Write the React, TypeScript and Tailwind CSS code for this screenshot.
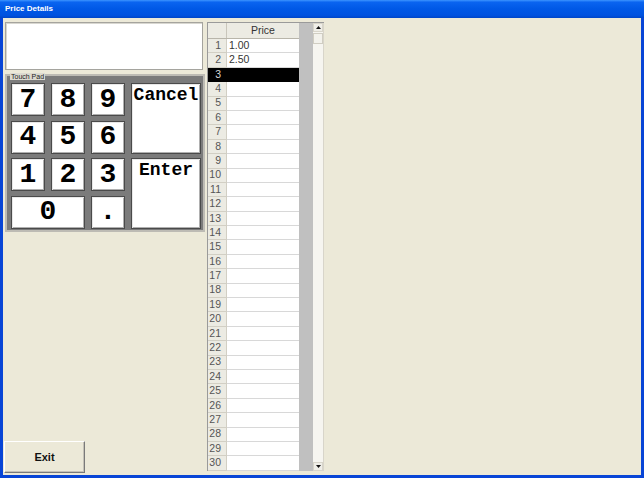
import React from "react";

const ui = { fontFamily: '"Liberation Sans", Arial, sans-serif' };
const mono = { fontFamily: '"Liberation Mono", "Courier New", monospace' };

const prices: Record<number, string> = { 1: "1.00", 2: "2.50" };
const rows = Array.from({ length: 30 }, (_, i) => i + 1);
const selectedRow = 3;

function PadKey({ label, className = "" }: { label: string; className?: string }) {
  return (
    <button
      className={`flex items-center justify-center bg-white border border-[#4a4a4a] shadow-[inset_1px_1px_0_#e8e8e8,inset_-1px_-1px_0_#b0b0b0] text-[28px] font-bold text-black leading-none ${className}`}
      style={mono}
    >
      {label}
    </button>
  );
}

function WordKey({ label, className = "" }: { label: string; className?: string }) {
  return (
    <button
      className={`flex items-start justify-center pt-[2px] bg-white border border-[#4a4a4a] shadow-[inset_1px_1px_0_#e8e8e8,inset_-1px_-1px_0_#b0b0b0] text-[18px] leading-[18px] font-bold text-black ${className}`}
      style={mono}
    >
      {label}
    </button>
  );
}

function TouchPad() {
  return (
    <div className="relative mt-[4px] w-[200px] h-[158px] bg-[#7b7b7b] border-2 border-[#bdbbb4] pl-[4px] pt-[7px]">
      <span
        className="absolute left-[3px] top-[-3px] px-[1px] bg-[#dcdad0] text-[7px] leading-[7px] text-[#222]"
        style={ui}
      >
        Touch Pad
      </span>
      <div className="grid grid-cols-[34px_34px_34px_70px] grid-rows-[33px_33px_33px_33px] gap-x-[6px] gap-y-[4.6px]">
        <PadKey label="7" />
        <PadKey label="8" />
        <PadKey label="9" />
        <WordKey label="Cancel" className="row-span-2" />
        <PadKey label="4" />
        <PadKey label="5" />
        <PadKey label="6" />
        <PadKey label="1" />
        <PadKey label="2" />
        <PadKey label="3" />
        <WordKey label="Enter" className="row-span-2" />
        <PadKey label="0" className="col-span-2" />
        <PadKey label="." />
      </div>
    </div>
  );
}

function ScrollArrow({ up }: { up: boolean }) {
  return (
    <div className="h-[9px] bg-[#efeee8] border border-[#d8d5ca] flex items-center justify-center">
      <svg width="5" height="3" viewBox="0 0 5 3">
        {up ? <polygon points="0,3 5,3 2.5,0" fill="#111" /> : <polygon points="0,0 5,0 2.5,3" fill="#111" />}
      </svg>
    </div>
  );
}

function PriceGrid() {
  return (
    <div className="ml-[1px] flex h-[449px] border-l border-t border-[#9a9a9a]" style={ui}>
      <div className="flex flex-col w-[91px]">
        <div className="flex h-[16px] shrink-0 border-b border-[#b8b5aa] bg-[#ecebe3]">
          <div className="w-[19px] border-r border-[#c9c6bb]" />
          <div className="flex-1 flex items-center justify-center text-[10.5px] text-[#333]">Price</div>
        </div>
        {rows.map((r) => {
          const sel = r === selectedRow;
          return (
            <div key={r} className="flex h-[14.4px] shrink-0">
              <div
                className={`w-[19px] flex items-center justify-end pr-[5px] text-[10.5px] border-r border-b ${
                  sel ? "bg-black text-[#d8d8d8] border-black" : "bg-[#ecebe3] text-[#555] border-[#d2cfc4]"
                }`}
              >
                {r}
              </div>
              <div
                className={`flex-1 flex items-center pl-[2px] text-[10.5px] border-b ${
                  sel ? "bg-black border-black" : "bg-white text-[#333] border-[#d8d8d8]"
                }`}
              >
                {prices[r] ?? ""}
              </div>
            </div>
          );
        })}
      </div>
      <div className="w-[14px] bg-[#c0c0c0]" />
      <div className="w-[11px] flex flex-col bg-[#f6f5f0] border-r border-[#d8d5ca]">
        <ScrollArrow up />
        <div className="mt-[1px] h-[11px] bg-[#f3f2ec] border border-[#d0cdc2]" />
        <div className="flex-1" />
        <ScrollArrow up={false} />
      </div>
    </div>
  );
}

export default function App() {
  return (
    <div className="w-[644px] h-[478px] flex flex-col bg-[#0845d6] overflow-hidden">
      <div className="h-[18px] shrink-0 flex items-center pl-[5px] bg-[linear-gradient(to_bottom,#3d95ff_0%,#0a64f0_12%,#0058e6_50%,#0052e0_85%,#0046c8_100%)]">
        <span className="text-white font-bold text-[8px] leading-none" style={ui}>
          Price Details
        </span>
      </div>
      <div className="flex-1 mx-[3px] mb-[3px] bg-[#ece9d8] flex pt-[4px]">
        <div className="w-[203px] flex flex-col pl-[2px]">
          <div className="w-[198px] h-[48px] bg-white border border-[#a5a49e] shadow-[inset_1px_1px_0_#d8d7d0]" />
          <TouchPad />
          <div className="flex-1" />
          <button
            className="ml-[-1px] mb-[2px] w-[81px] h-[32px] bg-[#ece9d8] border-t border-l border-white border-r border-b border-r-[#7a7a7a] border-b-[#7a7a7a] shadow-[inset_-1px_-1px_0_#c5c2b8] text-[11px] font-bold text-[#111]"
            style={ui}
          >
            Exit
          </button>
        </div>
        <PriceGrid />
      </div>
    </div>
  );
}
